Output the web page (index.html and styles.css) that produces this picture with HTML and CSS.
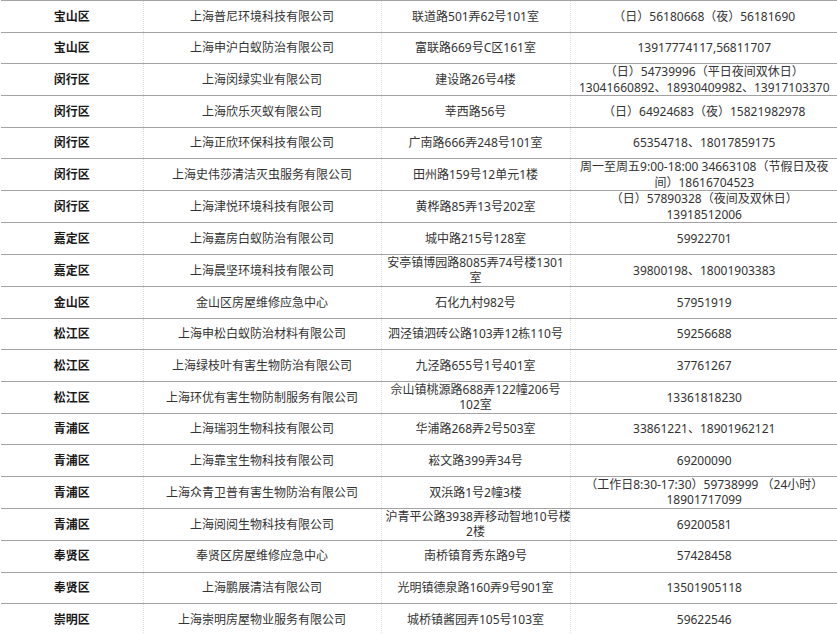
FILE: index.html
```html
<!DOCTYPE html>
<html lang="zh-CN">
<head>
<meta charset="utf-8">
<title>上海白蚁防治单位</title>
<link rel="stylesheet" href="styles.css">
</head>
<body>
<table class="list">
  <colgroup>
    <col class="c-district"><col class="c-company"><col class="c-addr"><col class="c-phone">
  </colgroup>
  <tbody>
    <tr><td class="district">宝山区</td><td>上海普尼环境科技有限公司</td><td>联道路501弄62号101室</td><td>（日）56180668（夜）56181690</td></tr>
    <tr><td class="district">宝山区</td><td>上海申沪白蚁防治有限公司</td><td>富联路669号C区161室</td><td>13917774117,56811707</td></tr>
    <tr><td class="district">闵行区</td><td>上海闵绿实业有限公司</td><td>建设路26号4楼</td><td>（日）54739996（平日夜间双休日）<br>13041660892、18930409982、13917103370</td></tr>
    <tr><td class="district">闵行区</td><td>上海欣乐灭蚁有限公司</td><td>莘西路56号</td><td>（日）64924683（夜）15821982978</td></tr>
    <tr><td class="district">闵行区</td><td>上海正欣环保科技有限公司</td><td>广南路666弄248号101室</td><td>65354718、18017859175</td></tr>
    <tr><td class="district">闵行区</td><td>上海史伟莎清洁灭虫服务有限公司</td><td>田州路159号12单元1楼</td><td>周一至周五9:00-18:00 34663108（节假日及夜<br>间）18616704523</td></tr>
    <tr><td class="district">闵行区</td><td>上海津悦环境科技有限公司</td><td>黄桦路85弄13号202室</td><td>（日）57890328（夜间及双休日）<br>13918512006</td></tr>
    <tr><td class="district">嘉定区</td><td>上海嘉房白蚁防治有限公司</td><td>城中路215号128室</td><td>59922701</td></tr>
    <tr><td class="district">嘉定区</td><td>上海晨坚环境科技有限公司</td><td>安亭镇博园路8085弄74号楼1301<br>室</td><td>39800198、18001903383</td></tr>
    <tr><td class="district">金山区</td><td>金山区房屋维修应急中心</td><td>石化九村982号</td><td>57951919</td></tr>
    <tr><td class="district">松江区</td><td>上海申松白蚁防治材料有限公司</td><td>泗泾镇泗砖公路103弄12栋110号</td><td>59256688</td></tr>
    <tr><td class="district">松江区</td><td>上海绿枝叶有害生物防治有限公司</td><td>九泾路655号1号401室</td><td>37761267</td></tr>
    <tr><td class="district">松江区</td><td>上海环优有害生物防制服务有限公司</td><td>佘山镇桃源路688弄122幢206号<br>102室</td><td>13361818230</td></tr>
    <tr><td class="district">青浦区</td><td>上海瑞羽生物科技有限公司</td><td>华浦路268弄2号503室</td><td>33861221、18901962121</td></tr>
    <tr><td class="district">青浦区</td><td>上海靠宝生物科技有限公司</td><td>崧文路399弄34号</td><td>69200090</td></tr>
    <tr><td class="district">青浦区</td><td>上海众青卫普有害生物防治有限公司</td><td>双浜路1号2幢3楼</td><td>（工作日8:30-17:30）59738999 （24小时）<br>18901717099</td></tr>
    <tr><td class="district">青浦区</td><td>上海阅阅生物科技有限公司</td><td>沪青平公路3938弄移动智地10号楼<br>2楼</td><td>69200581</td></tr>
    <tr><td class="district">奉贤区</td><td>奉贤区房屋维修应急中心</td><td>南桥镇育秀东路9号</td><td>57428458</td></tr>
    <tr><td class="district">奉贤区</td><td>上海鹏展清洁有限公司</td><td>光明镇德泉路160弄9号901室</td><td>13501905118</td></tr>
    <tr><td class="district">崇明区</td><td>上海崇明房屋物业服务有限公司</td><td>城桥镇酱园弄105号103室</td><td>59622546</td></tr>
  </tbody>
</table>
</body>
</html>
```

FILE: styles.css
```css
html, body {
  margin: 0;
  padding: 0;
  background: #ffffff;
}

body {
  font-family: "Noto Sans", "Noto Sans CJK SC", sans-serif;
  font-size: 12px;
  color: #333333;
  overflow: hidden;
}

.list {
  border-collapse: collapse;
  table-layout: fixed;
  width: 837px;
  margin-left: 1px;
}

.c-district { width: 142px; }
.c-company { width: 238px; }
.c-addr { width: 189px; }
.c-phone { width: 268px; }

.list tr {
  height: 31.6px;
}

.list td {
  padding: 0 4px;
  text-align: center;
  vertical-align: middle;
  line-height: 15.5px;
  white-space: nowrap;
  border-top: 1px solid #a3a3a3;
  border-bottom: 1px solid #a3a3a3;
  border-left: 1px dotted #dedede;
}

.list td:first-child {
  border-left: none;
}

.list td.district {
  font-weight: bold;
  color: #1a1a1a;
}
```
